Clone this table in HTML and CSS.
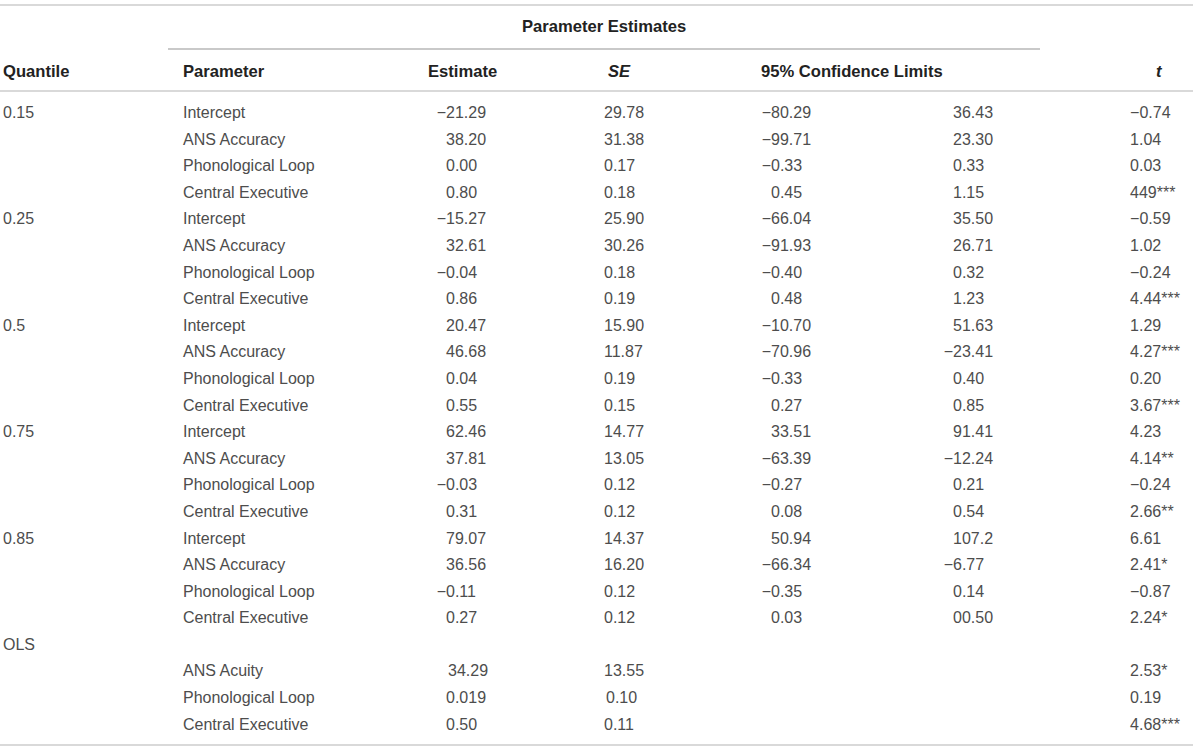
FILE: index.html
```html
<!DOCTYPE html>
<html>
<head>
<meta charset="utf-8">
<link rel="stylesheet" href="styles.css">
</head>
<body>
<table class="tbl">
  <colgroup>
    <col class="c1"><col class="c2"><col class="c3"><col class="c4"><col class="c5"><col class="c6"><col class="c7">
  </colgroup>
  <thead>
    <tr class="r1">
      <th></th>
      <th class="span" colspan="5">Parameter Estimates</th>
      <th></th>
    </tr>
    <tr class="r2">
      <th class="q">Quantile</th>
      <th class="p">Parameter</th>
      <th class="e">Estimate</th>
      <th class="s"><i>SE</i></th>
      <th class="l" colspan="2">95% Confidence Limits</th>
      <th class="t"><i>t</i></th>
    </tr>
  </thead>
  <tbody>
    <tr><td class="q">0.15</td><td class="p">Intercept</td><td class="e"><span class="neg">−21.29</span></td><td class="s">29.78</td><td class="l"><span class="neg">−80.29</span></td><td class="u">36.43</td><td class="t">−0.74</td></tr>
    <tr><td class="q"></td><td class="p">ANS Accuracy</td><td class="e">38.20</td><td class="s">31.38</td><td class="l"><span class="neg">−99.71</span></td><td class="u">23.30</td><td class="t">1.04</td></tr>
    <tr><td class="q"></td><td class="p">Phonological Loop</td><td class="e">0.00</td><td class="s">0.17</td><td class="l"><span class="neg">−0.33</span></td><td class="u">0.33</td><td class="t">0.03</td></tr>
    <tr><td class="q"></td><td class="p">Central Executive</td><td class="e">0.80</td><td class="s">0.18</td><td class="l">0.45</td><td class="u">1.15</td><td class="t">449***</td></tr>

    <tr><td class="q">0.25</td><td class="p">Intercept</td><td class="e"><span class="neg">−15.27</span></td><td class="s">25.90</td><td class="l"><span class="neg">−66.04</span></td><td class="u">35.50</td><td class="t">−0.59</td></tr>
    <tr><td class="q"></td><td class="p">ANS Accuracy</td><td class="e">32.61</td><td class="s">30.26</td><td class="l"><span class="neg">−91.93</span></td><td class="u">26.71</td><td class="t">1.02</td></tr>
    <tr><td class="q"></td><td class="p">Phonological Loop</td><td class="e"><span class="neg">−0.04</span></td><td class="s">0.18</td><td class="l"><span class="neg">−0.40</span></td><td class="u">0.32</td><td class="t">−0.24</td></tr>
    <tr><td class="q"></td><td class="p">Central Executive</td><td class="e">0.86</td><td class="s">0.19</td><td class="l">0.48</td><td class="u">1.23</td><td class="t">4.44***</td></tr>

    <tr><td class="q">0.5</td><td class="p">Intercept</td><td class="e">20.47</td><td class="s">15.90</td><td class="l"><span class="neg">−10.70</span></td><td class="u">51.63</td><td class="t">1.29</td></tr>
    <tr><td class="q"></td><td class="p">ANS Accuracy</td><td class="e">46.68</td><td class="s">11.87</td><td class="l"><span class="neg">−70.96</span></td><td class="u"><span class="neg">−23.41</span></td><td class="t">4.27***</td></tr>
    <tr><td class="q"></td><td class="p">Phonological Loop</td><td class="e">0.04</td><td class="s">0.19</td><td class="l"><span class="neg">−0.33</span></td><td class="u">0.40</td><td class="t">0.20</td></tr>
    <tr><td class="q"></td><td class="p">Central Executive</td><td class="e">0.55</td><td class="s">0.15</td><td class="l">0.27</td><td class="u">0.85</td><td class="t">3.67***</td></tr>

    <tr><td class="q">0.75</td><td class="p">Intercept</td><td class="e">62.46</td><td class="s">14.77</td><td class="l">33.51</td><td class="u">91.41</td><td class="t">4.23</td></tr>
    <tr><td class="q"></td><td class="p">ANS Accuracy</td><td class="e">37.81</td><td class="s">13.05</td><td class="l"><span class="neg">−63.39</span></td><td class="u"><span class="neg">−12.24</span></td><td class="t">4.14**</td></tr>
    <tr><td class="q"></td><td class="p">Phonological Loop</td><td class="e"><span class="neg">−0.03</span></td><td class="s">0.12</td><td class="l"><span class="neg">−0.27</span></td><td class="u">0.21</td><td class="t">−0.24</td></tr>
    <tr><td class="q"></td><td class="p">Central Executive</td><td class="e">0.31</td><td class="s">0.12</td><td class="l">0.08</td><td class="u">0.54</td><td class="t">2.66**</td></tr>

    <tr><td class="q">0.85</td><td class="p">Intercept</td><td class="e">79.07</td><td class="s">14.37</td><td class="l">50.94</td><td class="u">107.2</td><td class="t">6.61</td></tr>
    <tr><td class="q"></td><td class="p">ANS Accuracy</td><td class="e">36.56</td><td class="s">16.20</td><td class="l"><span class="neg">−66.34</span></td><td class="u"><span class="neg">−6.77</span></td><td class="t">2.41*</td></tr>
    <tr><td class="q"></td><td class="p">Phonological Loop</td><td class="e"><span class="neg">−0.11</span></td><td class="s">0.12</td><td class="l"><span class="neg">−0.35</span></td><td class="u">0.14</td><td class="t">−0.87</td></tr>
    <tr><td class="q"></td><td class="p">Central Executive</td><td class="e">0.27</td><td class="s">0.12</td><td class="l">0.03</td><td class="u">00.50</td><td class="t">2.24*</td></tr>

    <tr><td class="q">OLS</td><td class="p"></td><td class="e"></td><td class="s"></td><td class="l"></td><td class="u"></td><td class="t"></td></tr>
    <tr><td class="q"></td><td class="p">ANS Acuity</td><td class="e"><span class="nudge">34.29</span></td><td class="s">13.55</td><td class="l"></td><td class="u"></td><td class="t">2.53*</td></tr>
    <tr><td class="q"></td><td class="p">Phonological Loop</td><td class="e">0.019</td><td class="s"><span class="nudge">0.10</span></td><td class="l"></td><td class="u"></td><td class="t">0.19</td></tr>
    <tr><td class="q"></td><td class="p">Central Executive</td><td class="e">0.50</td><td class="s">0.11</td><td class="l"></td><td class="u"></td><td class="t">4.68***</td></tr>
  </tbody>
</table>
</body>
</html>
```

FILE: styles.css
```css
html, body {
  margin: 0;
  padding: 0;
  background: #ffffff;
}

body {
  font-family: "Liberation Sans", Arial, Helvetica, sans-serif;
  font-size: 16px;
  color: #4d4d4d;
}

.tbl {
  margin-top: 4px;
  width: 1193px;
  table-layout: fixed;
  border-collapse: separate;
  border-spacing: 0;
  border-top: 2px solid #d9d9d9;
  border-bottom: 2px solid #d9d9d9;
}

.c1 { width: 168px; }
.c2 { width: 260px; }
.c3 { width: 176px; }
.c4 { width: 157px; }
.c5 { width: 192px; }
.c6 { width: 87px; }
.c7 { width: 153px; }

th {
  font-size: 16.6px;
  font-weight: bold;
  color: #222222;
  text-align: left;
  padding: 0;
  white-space: nowrap;
}

th i {
  font-style: italic;
}

.r1 th {
  height: 42px;
  vertical-align: middle;
}

.r1 .span {
  text-align: center;
  border-bottom: 2px solid #c9c9c9;
}

.r2 th {
  height: 36px;
  padding-top: 4px;
  vertical-align: middle;
  border-bottom: 2px solid #d9d9d9;
}

td {
  padding: 0;
  line-height: 26.6px;
  white-space: nowrap;
  vertical-align: middle;
}

tbody tr:first-child td {
  padding-top: 8px;
}

tbody tr:last-child td {
  padding-bottom: 6px;
}

.q { padding-left: 3px; }
th.q { padding-left: 3px; }
.p { padding-left: 15px; }
th.p { padding-left: 15px; }
td.e { padding-left: 18px; }
th.e { padding-left: 0; }
td.s { padding-left: 0; }
th.s { padding-left: 4px; }
td.l { padding-left: 10px; }
th.l { padding-left: 0; }
td.u { padding-left: 0; }
td.t { padding-left: 90px; }
th.t { padding-left: 116px; }

.neg {
  margin-left: -0.584em;
}

.nudge {
  margin-left: 2px;
}
```
